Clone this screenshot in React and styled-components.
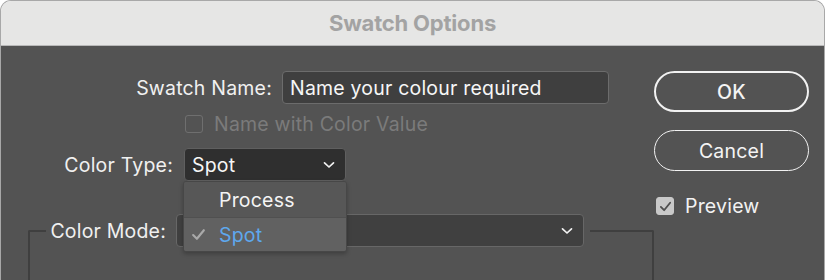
import React from "react";
import styled, { createGlobalStyle } from "styled-components";

const Global = createGlobalStyle`
  html, body { margin: 0; padding: 0; background: #ffffff; }
  body { font-family: Inter, "Open Sans", "Liberation Sans", sans-serif; }
  * { box-sizing: border-box; }
`;

const Window = styled.div`
  width: 825px;
  height: 280px;
  border-radius: 11px 11px 0 0;
  overflow: hidden;
  border: 1px solid #a8a8a8;
  border-bottom: none;
  display: flex;
  flex-direction: column;
`;

const TitleBar = styled.div`
  height: 45px;
  flex: none;
  background: #e6e6e5;
  border-bottom: 1px solid #b9b9b9;
  display: flex;
  align-items: center;
  justify-content: center;
  font-size: 22px;
  font-weight: 700;
  color: #a3a3a3;
  letter-spacing: -0.2px;
`;

const Body = styled.div`
  flex: 1;
  background: #535353;
  display: flex;
  color: #f2f2f2;
  font-size: 19.5px;
  letter-spacing: 0.2px;
`;

const Main = styled.div`
  width: 652px;
  position: relative;
  padding-top: 25px;
  display: flex;
  flex-direction: column;
`;

const Row = styled.div`
  display: grid;
  grid-template-columns: ${(p) => p.$labelEnd}px auto;
  column-gap: ${(p) => p.$gap || 10}px;
  align-items: center;
  margin-top: ${(p) => p.$top || 0}px;
`;

const Label = styled.label`
  text-align: right;
  white-space: nowrap;
  color: #f0f0f0;
`;

const TextInput = styled.div`
  width: 327px;
  height: 33px;
  background: #3f3f3f;
  border: 1px solid #6c6c6c;
  border-radius: 4px;
  padding: 0 0 0 7px;
  display: flex;
  align-items: center;
  color: #f6f6f6;
  white-space: nowrap;
`;

const Select = styled.div`
  width: ${(p) => p.$w}px;
  height: 33px;
  background: ${(p) => p.$bg || "#404040"};
  border: 1px solid ${(p) => p.$border || "#676767"};
  border-radius: 4px;
  padding: 0 10px 0 7px;
  display: flex;
  align-items: center;
  justify-content: space-between;
  color: #f6f6f6;
`;

const CheckRow = styled.div`
  display: flex;
  align-items: center;
  gap: 11px;
  margin-left: ${(p) => p.$left || 0}px;
  margin-top: ${(p) => p.$top || 0}px;
  color: ${(p) => (p.$disabled ? "#7b7b7b" : "#f2f2f2")};
`;

const Box = styled.span`
  width: 18px;
  height: 18px;
  border-radius: 3px;
  flex: none;
  display: flex;
  align-items: center;
  justify-content: center;
  border: 1px solid ${(p) => (p.$checked ? "#c9c9c9" : "#6f6f6f")};
  background: ${(p) => (p.$checked ? "#c9c9c9" : "transparent")};
`;

const Group = styled.fieldset`
  margin: 33px 0 0 27px;
  padding: 0;
  width: 626px;
  height: 80px;
  border: 2px solid #3f3f3f;
  border-bottom: none;
  border-radius: 2px 2px 0 0;
`;

const Legend = styled.legend`
  margin-left: 16px;
  padding: 0 6px 0 0;
`;

const Menu = styled.div`
  position: absolute;
  left: 182px;
  top: 135px;
  width: 164px;
  background: #585858;
  border: 1px solid #474747;
  border-radius: 3px;
  box-shadow: 0 2px 4px rgba(0, 0, 0, 0.25);
  overflow: hidden;
  z-index: 2;
`;

const MenuItem = styled.div`
  height: ${(p) => p.$h}px;
  display: flex;
  align-items: center;
  padding-left: 7px;
  gap: 13px;
  background: ${(p) => (p.$active ? "#616161" : "#575757")};
  border-top: ${(p) => (p.$active ? "1px solid #505050" : "none")};
  color: ${(p) => (p.$active ? "#5ea8ee" : "#f4f4f4")};
`;

const CheckSlot = styled.span`
  width: 15px;
  display: flex;
  justify-content: center;
`;

const Side = styled.div`
  width: 155px;
  margin-left: 1px;
  padding-top: 25px;
  display: flex;
  flex-direction: column;
`;

const Button = styled.button`
  width: 155px;
  height: 41px;
  border-radius: 21px;
  background: transparent;
  border: ${(p) => (p.$primary ? "2.5px" : "1.5px")} solid #f2f2f2;
  color: #f4f4f4;
  font: inherit;
  font-size: 19.5px;
  letter-spacing: 0.2px;
  font-weight: ${(p) => (p.$primary ? 500 : 400)};
  margin-top: ${(p) => p.$top || 0}px;
  padding: 0;
`;

const Chevron = () => (
  <svg width="12" height="8" viewBox="0 0 12 8">
    <path d="M1.5 1.8 L6 6 L10.5 1.8" fill="none" stroke="#f2f2f2" strokeWidth="1.7" strokeLinecap="round" strokeLinejoin="round" />
  </svg>
);

const Tick = ({ color, size = 13 }) => (
  <svg width={size} height={size} viewBox="0 0 14 14">
    <path d="M2 7.5 L5.5 11 L12 3" fill="none" stroke={color} strokeWidth="2" strokeLinecap="round" strokeLinejoin="round" />
  </svg>
);

export default function App() {
  return (
    <>
      <Global />
      <Window>
        <TitleBar>Swatch Options</TitleBar>
        <Body>
          <Main>
            <Row $labelEnd={271}>
              <Label>Swatch Name:</Label>
              <TextInput>Name your colour required</TextInput>
            </Row>
            <CheckRow $left={184} $top={8} $disabled>
              <Box />
              Name with Color Value
            </CheckRow>
            <Row $labelEnd={172} $gap={11} $top={12}>
              <Label>Color Type:</Label>
              <Select $w={162} $bg="#2f2f2f" $border="#5f5f5f">
                Spot
                <Chevron />
              </Select>
            </Row>
            <Group>
              <Legend>
                <Row $labelEnd={120} $gap={10}>
                  <Label>Color Mode:</Label>
                  <Select $w={408}>
                    <span>C</span>
                    <Chevron />
                  </Select>
                </Row>
              </Legend>
            </Group>
            <Menu>
              <MenuItem $h={35}>
                <CheckSlot />
                Process
              </MenuItem>
              <MenuItem $h={34} $active>
                <CheckSlot>
                  <Tick color="#a9a9a9" size={15} />
                </CheckSlot>
                Spot
              </MenuItem>
            </Menu>
          </Main>
          <Side>
            <Button $primary>OK</Button>
            <Button $top={18}>Cancel</Button>
            <CheckRow $left={2} $top={23}>
              <Box $checked>
                <Tick color="#505050" size={13} />
              </Box>
              Preview
            </CheckRow>
          </Side>
        </Body>
      </Window>
    </>
  );
}
